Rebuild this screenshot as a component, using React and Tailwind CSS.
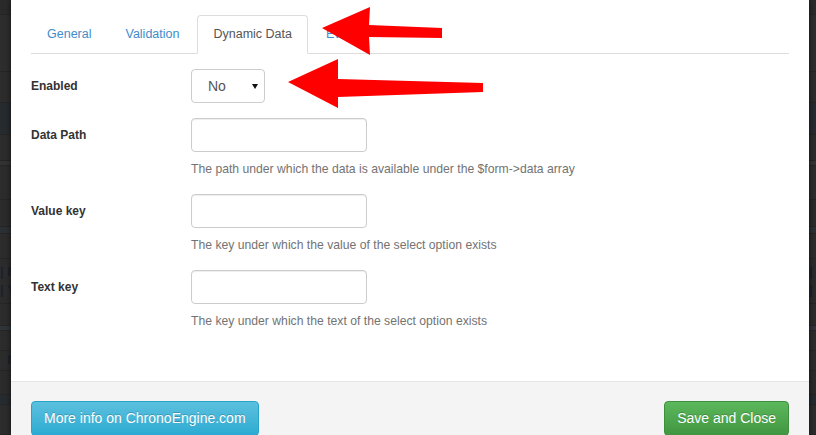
import React from "react";

const rows = [
  { h: "h-[15px]", bg: "bg-[#2a2a2a]" },
  { h: "h-[58px]", bg: "bg-[#2d2d2d]" },
  { h: "h-[31px]", bg: "bg-[#2c2c2c]" },
  { h: "h-[33px]", bg: "bg-[#262b2f]" },
  { h: "h-[26px]", bg: "bg-[#2c2c2c]" },
  { h: "h-[5px]", bg: "bg-[#333333]" },
  { h: "h-[34px]", bg: "bg-[#2c2c2c]" },
  { h: "h-[28px]", bg: "bg-[#2b2b2b]" },
  { h: "h-[7px]", bg: "bg-[#2b3034]" },
  { h: "h-[25px]", bg: "bg-[#2c2c2c]" },
  { h: "h-[46px]", bg: "bg-[#2c2c2c]", text: ["| M", "| Y"] },
  { h: "h-[22px]", bg: "bg-[#2c2c2c]" },
  { h: "h-[5px]", bg: "bg-[#30353a]" },
  { h: "h-[20px]", bg: "bg-[#2c2c2c]" },
  { h: "h-[20px]", bg: "bg-[#2c2c2c]", text: ["  N"] },
  { h: "h-[25px]", bg: "bg-[#2b2b2b]" },
  { h: "h-[10px]", bg: "bg-[#262b2f]" },
  { h: "h-[30px]", bg: "bg-[#2c2c2c]" },
];

function Backdrop({ width }) {
  return (
    <div className={`${width} shrink-0 flex flex-col overflow-hidden`}>
      {rows.map((r, i) => (
        <div key={i} className={`${r.h} ${r.bg} border-b border-[#252525] flex flex-col justify-center whitespace-pre text-[13px] font-bold leading-[18px] text-[#18222c]`}>
          {r.text && r.text.map((t) => <div key={t}>{t}</div>)}
        </div>
      ))}
    </div>
  );
}

function Tab({ label, active }) {
  if (active) {
    return (
      <div className="h-[39px] -mb-px mr-[2px] px-[15px] flex items-center rounded-t border border-[#ddd] border-b-white bg-white text-[#555]">
        {label}
      </div>
    );
  }
  return (
    <div className="h-[39px] -mb-px mr-[2px] px-[15px] flex items-center rounded-t border border-transparent text-[#428bca]">
      {label}
    </div>
  );
}

function Field({ label, help }) {
  return (
    <div className="flex mb-[16px]">
      <div className="w-[160px] h-[34px] flex items-center text-[12px] font-bold text-[#333]">{label}</div>
      <div>
        <div className="w-[176px] h-[34px] rounded border border-[#ccc] bg-white shadow-[inset_0_1px_1px_rgba(0,0,0,0.075)]" />
        <div className="mt-2 h-[18px] leading-[18px] text-[12.2px] text-[#737373] whitespace-nowrap">{help}</div>
      </div>
    </div>
  );
}

export default function App() {
  return (
    <div className="relative flex w-[816px] h-[435px] overflow-hidden bg-[#2b2b2b] font-['Liberation_Sans',Arial,sans-serif]">
      <Backdrop width="w-[11px]" />
      <div className="flex-1 flex flex-col bg-white shadow-[0_0_6px_rgba(0,0,0,0.6)] z-10">
        <div className="flex-1 px-5 pt-[15px]">
          <div className="flex border-b border-[#ddd] text-[12.5px]">
            <Tab label="General" />
            <Tab label="Validation" />
            <Tab label="Dynamic Data" active />
            <Tab label="Events" />
          </div>
          <div className="pt-[15px]">
            <div className="flex mb-[15px]">
              <div className="w-[160px] h-[34px] flex items-center text-[12px] font-bold text-[#333]">Enabled</div>
              <div className="w-[74px] h-[34px] rounded border border-[#ccc] bg-white flex items-center justify-between pl-4 pr-[6px] text-[14px] text-[#555]">
                <span>No</span>
                <svg width="6" height="5" viewBox="0 0 6 5">
                  <path d="M0 0 H6 L3 5 Z" fill="#111" />
                </svg>
              </div>
            </div>
            <Field label="Data Path" help="The path under which the data is available under the $form->data array" />
            <Field label="Value key" help="The key under which the value of the select option exists" />
            <Field label="Text key" help="The key under which the text of the select option exists" />
          </div>
        </div>
        <div className="h-[54px] shrink-0 border-t border-[#e5e5e5] bg-[#f4f4f4] px-5 pt-[19px] flex justify-between items-start text-[14px]">
          <button className="h-[35px] px-3 rounded border border-[#28a4c9] bg-gradient-to-b from-[#5bc0de] to-[#2aabd2] text-white [text-shadow:0_-1px_0_rgba(0,0,0,0.2)]">
            More info on ChronoEngine.com
          </button>
          <button className="h-[35px] px-3 rounded border border-[#3e8f3e] bg-gradient-to-b from-[#5cb85c] to-[#419641] text-white [text-shadow:0_-1px_0_rgba(0,0,0,0.2)]">
            Save and Close
          </button>
        </div>
      </div>
      <Backdrop width="w-[7px]" />
      <svg className="absolute inset-0 z-20 pointer-events-none" width="816" height="435" viewBox="0 0 816 435">
        <polygon points="322,28 370,7 369,25 442,28 442,38 369,37 370,55" fill="#fe0000" />
        <polygon points="288,82 338,59 338,79 483,83 483,92 338,97 338,108" fill="#fe0000" />
      </svg>
    </div>
  );
}
